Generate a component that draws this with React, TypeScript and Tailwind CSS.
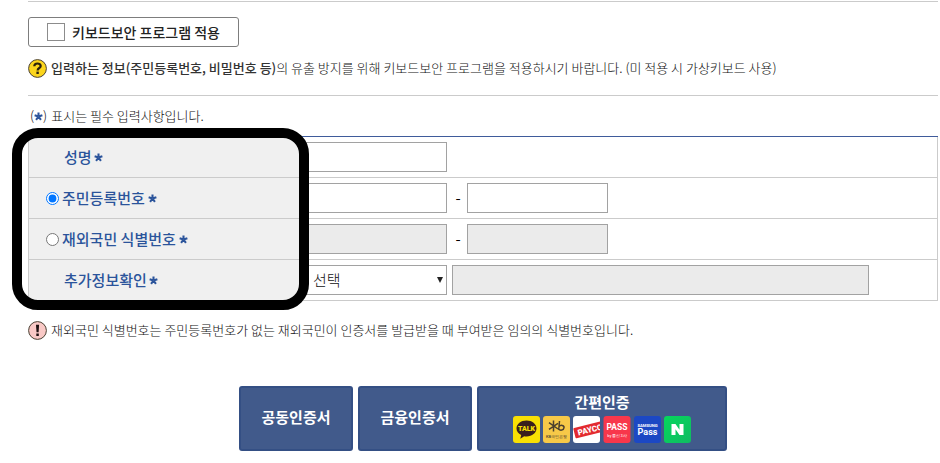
import { useState } from "react";
import type { ReactNode } from "react";

const INPUT = "h-[30px] rounded-none border border-[#a2a2a2] bg-white px-1.5 text-[15px] outline-none disabled:bg-[#ebebeb]";

function Required() {
  return (
    <svg viewBox="0 0 10 10" className="size-[9px] shrink-0" role="img" aria-label="필수">
      <path
        d="M5 5V0.6M5 5L9.3 3.6M5 5L7.7 8.8M5 5L2.3 8.8M5 5L0.7 3.6"
        stroke="#2b549b"
        strokeWidth="2.3"
        fill="none"
      />
    </svg>
  );
}

function NoticeIcon({ mark, fill }: { mark: "?" | "!"; fill: string }) {
  return (
    <svg viewBox="0 0 19 19" className="size-[19px] shrink-0" aria-hidden="true">
      <circle cx="9.5" cy="9.5" r="8.9" fill={fill} stroke="#4a4032" strokeWidth="1" />
      {mark === "?" ? (
        <>
          <path d="M6.3 7.3C6.3 5.4 7.8 4.5 9.5 4.5S12.7 5.4 12.7 7.1C12.7 9 9.6 9.1 9.6 11.5" fill="none" stroke="#2b220c" strokeWidth="2.2" />
          <rect x="8.4" y="12.6" width="2.4" height="2.4" fill="#2b220c" />
        </>
      ) : (
        <>
          <path d="M8 3.8h3.100l-.5 7.400H8.500z" fill="#1d1010" />
          <rect x="8.3" y="12.5" width="2.5" height="2.5" fill="#1d1010" />
        </>
      )}
    </svg>
  );
}

function Row({ label, children }: { label: ReactNode; children: ReactNode }) {
  return (
    <tr>
      <th
        scope="row"
        className="w-[272px] border-b border-l border-[#cbcbcb] bg-[#f0f0f0] p-0 text-left text-[15px] leading-5 font-medium text-[#2b549b]"
      >
        {label}
      </th>
      <td className="border-r border-b border-[#cbcbcb] py-[5px] pl-1.5">
        <div className="flex items-center">{children}</div>
      </td>
    </tr>
  );
}

function SimpleAuthIcons() {
  return (
    <svg viewBox="0 0 178 27" className="h-[27px] w-[178px]" aria-hidden="true" fontFamily="Roboto, 'Liberation Sans', sans-serif">
      <defs>
        <clipPath id="payco">
          <rect x="60" width="27" height="27" rx="3" />
        </clipPath>
        <linearGradient id="naver" x1="0" y1="0" x2="1" y2="1">
          <stop offset="0" stopColor="#05d75c" />
          <stop offset="1" stopColor="#10bb62" />
        </linearGradient>
      </defs>

      <rect width="27" height="27" rx="3" fill="#f9e004" />
      <path d="M13.5 4.6c5.6 0 10 3.5 10 7.9s-4.4 7.9-10 7.9c-.8 0-1.6-.1-2.3-.2L7.3 22.8l.9-3.700C5.300 17.700 3.500 15.300 3.500 12.500c0-4.400 4.400-7.900 10-7.900z" fill="#3a1f1d" />
      <text x="13.5" y="15.2" textAnchor="middle" fontSize="7" fontWeight="900" fill="#f9e004">TALK</text>

      <rect x="30" width="27" height="27" rx="3" fill="#f7c948" />
      <path d="M40.5 4.5v11M36 6.7l9 6.3M36 13.3l9-6M46.5 5l-.8 9M45.8 11c1.500-2.500 5.500-2 5.200.6-.3 2.700-3.800 3.300-5.500 1.500" fill="none" stroke="#4c402f" strokeWidth="1.5" />
      <text x="43.5" y="21.500" textAnchor="middle" fontSize="4" fontWeight="500" fill="#4c402f">KB국민은행</text>

      <rect x="60" width="27" height="27" rx="3" fill="#fff" />
      <g clipPath="url(#payco)">
        <g transform="rotate(-14 74 14)">
          <rect x="61" y="9" width="32" height="10.5" rx="1" fill="#e32a2f" />
          <text x="64.500" y="17.2" fontSize="8" fontWeight="900" fill="#fff">PAYCO</text>
        </g>
      </g>

      <rect x="90.5" width="27" height="27" rx="3" fill="#f8374b" />
      <text x="104" y="14" textAnchor="middle" fontSize="8.5" fontWeight="700" fill="#fff">PASS</text>
      <text x="104" y="20.5" textAnchor="middle" fontSize="4" fill="#ffc9ce">by 통신3사</text>

      <rect x="121" width="27" height="27" rx="3" fill="#1c48c4" />
      <text x="134.5" y="10.5" textAnchor="middle" fontSize="4.200" fontWeight="700" fill="#fff">SAMSUNG</text>
      <text x="134.5" y="18.8" textAnchor="middle" fontSize="9" fontWeight="700" fill="#fff">Pass</text>

      <rect x="151" width="27" height="27" rx="3" fill="url(#naver)" />
      <path d="M158.500 8h4l4 5.800V8h4v11h-4l-4-5.800V19h-4z" fill="#fff" />
    </svg>
  );
}

const AUTH_BUTTON =
  "h-[65px] cursor-pointer rounded-[3px] border-2 border-[#344f84] bg-[#415a8b] text-[15px] leading-5 font-bold text-white";

export default function App() {
  const [keySecurity, setKeySecurity] = useState(false);
  const [idType, setIdType] = useState<"resident" | "overseas">("resident");
  const [extra, setExtra] = useState("");

  const isResident = idType === "resident";

  return (
    <main className="bg-white pt-px pr-0.5 pb-3 pl-7 font-['Noto_Sans_CJK_KR','Noto_Sans_KR',sans-serif] text-[13px] leading-5 font-light text-[#111]">
      <section className="border-y border-[#cbcbcb] pt-[15px] pb-4">
        <label className="inline-flex h-[30px] items-center gap-[7px] rounded-[3px] border border-[#7d7d7d] px-[18px] align-top text-sm font-medium text-[#222]">
          <input
            type="checkbox"
            checked={keySecurity}
            onChange={(e) => setKeySecurity(e.target.checked)}
            className="size-[18px] appearance-none border border-[#8c8c8c] bg-white checked:bg-[#2b549b]"
          />
          키보드보안 프로그램 적용
        </label>
        <p className="mt-[11px] mb-px flex items-center gap-1">
          <NoticeIcon mark="?" fill="#fbd51c" />
          <span>
            <strong className="font-medium text-[#333]">입력하는 정보(주민등록번호, 비밀번호 등)</strong>의 유출 방지를 위해 키보드보안
            프로그램을 적용하시기 바랍니다. (미 적용 시 가상키보드 사용)
          </span>
        </p>
      </section>

      <p className="my-2.5 flex items-center pl-0.5">
        (<Required />)<span className="ml-1">표시는 필수 입력사항입니다.</span>
      </p>

      <div className="relative">
        <table className="w-full border-separate border-spacing-0 border-t border-[#3f5b9b]">
          <tbody>
            <Row
              label={
                <label htmlFor="name" className="flex items-center gap-0.5 pl-[35px]">
                  성명
                  <Required />
                </label>
              }
            >
              <input id="name" type="text" className={`${INPUT} w-[141px]`} />
            </Row>
            <Row
              label={
                <label className="flex items-center gap-[3px] pl-[17px]">
                  <input
                    type="radio"
                    name="idType"
                    className="size-[13px]"
                    checked={isResident}
                    onChange={() => setIdType("resident")}
                  />
                  주민등록번호
                  <Required />
                </label>
              }
            >
              <input type="text" aria-label="주민등록번호 앞자리" disabled={!isResident} className={`${INPUT} w-[141px]`} />
              <span className="w-5 pl-0.5 text-center text-[15px] font-normal text-black">-</span>
              <input type="password" aria-label="주민등록번호 뒷자리" disabled={!isResident} className={`${INPUT} w-[141px]`} />
            </Row>
            <Row
              label={
                <label className="flex items-center gap-[3px] pl-[17px]">
                  <input
                    type="radio"
                    name="idType"
                    className="size-[13px]"
                    checked={!isResident}
                    onChange={() => setIdType("overseas")}
                  />
                  재외국민 식별번호
                  <Required />
                </label>
              }
            >
              <input type="text" aria-label="재외국민 식별번호 앞자리" disabled={isResident} className={`${INPUT} w-[141px]`} />
              <span className="w-5 pl-0.5 text-center text-[15px] font-normal text-black">-</span>
              <input type="password" aria-label="재외국민 식별번호 뒷자리" disabled={isResident} className={`${INPUT} w-[141px]`} />
            </Row>
            <Row
              label={
                <label htmlFor="extra" className="flex items-center gap-0.5 pl-[35px]">
                  추가정보확인
                  <Required />
                </label>
              }
            >
              <div className="relative w-[141px]">
                <select
                  id="extra"
                  value={extra}
                  onChange={(e) => setExtra(e.target.value)}
                  className={`${INPUT} block w-full appearance-none`}
                >
                  <option value="">선택</option>
                  <option value="phone">휴대전화</option>
                  <option value="address">주소</option>
                </select>
                <svg viewBox="0 0 6 6" className="pointer-events-none absolute top-3 right-1 size-1.5" aria-hidden="true">
                  <path d="M0 0h6L3 6z" fill="#222" />
                </svg>
              </div>
              <input type="text" aria-label="추가정보" disabled={!extra} className={`${INPUT} ml-[5px] w-[417px]`} />
            </Row>
          </tbody>
        </table>
        <div className="pointer-events-none absolute -top-2 -bottom-[9px] -left-4 w-[297px] rounded-[26px] border-10 border-black" />
      </div>

      <p className="mt-[19px] flex items-center gap-1">
        <NoticeIcon mark="!" fill="#f9c9c6" />
        재외국민 식별번호는 주민등록번호가 없는 재외국민이 인증서를 발급받을 때 부여받은 임의의 식별번호입니다.
      </p>

      <div className="mt-[46px] flex justify-center gap-[5px]">
        <button type="button" className={`${AUTH_BUTTON} w-[114px] pb-1`}>
          공동인증서
        </button>
        <button type="button" className={`${AUTH_BUTTON} w-[114px] pb-1`}>
          금융인증서
        </button>
        <button type="button" className={`${AUTH_BUTTON} flex w-[250px] flex-col items-center justify-center gap-1 pb-0.5`}>
          간편인증
          <SimpleAuthIcons />
        </button>
      </div>
    </main>
  );
}
